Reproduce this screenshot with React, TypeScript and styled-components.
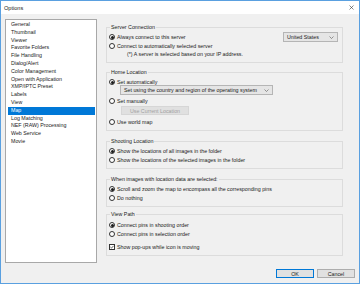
import React from "react";
import styled, { createGlobalStyle } from "styled-components";

const Global = createGlobalStyle`
  html, body { margin: 0; padding: 0; background: #ffffff; }
  body { font-family: "Liberation Sans", Arial, sans-serif; }
  * { box-sizing: border-box; }
`;

const Window = styled.div`
  width: 360px;
  height: 284px;
  border: 1px solid #5aa0e0;
  display: flex;
  flex-direction: column;
  background: #f0f0f0;
  color: #1a1a1a;
  font-size: 5.3px;
  overflow: hidden;
`;

const TitleBar = styled.div`
  height: 13px;
  flex: none;
  background: #ffffff;
  display: flex;
  align-items: center;
  justify-content: space-between;
  padding: 0 5px 0 3px;
  font-size: 5.6px;
  color: #222;
`;

const Body = styled.div`
  flex: 1;
  display: flex;
  flex-direction: column;
  padding: 5px 4px 5px 4px;
`;

const Main = styled.div`
  display: flex;
  gap: 9px;
  height: 244px;
  flex: none;
`;

const ListBox = styled.div`
  width: 92px;
  height: 244px;
  background: #ffffff;
  border: 1px solid #a8a8a8;
  padding: 1px 1px;
  display: flex;
  flex-direction: column;
`;

const ListItem = styled.div<{ $selected?: boolean }>`
  height: 7.8px;
  line-height: 7.8px;
  padding-left: 3px;
  margin-left: 1px;
  background: ${(p) => (p.$selected ? "#0078d7" : "transparent")};
  color: ${(p) => (p.$selected ? "#ffffff" : "#1a1a1a")};
  white-space: nowrap;
`;

const RightCol = styled.div`
  width: 237px;
  display: flex;
  flex-direction: column;
`;

const Group = styled.fieldset<{ $mt: number; $pt?: number; $pb?: number }>`
  margin: ${(p) => p.$mt}px 0 0 0;
  border: 1px solid #dcdcdc;
  padding: ${(p) => p.$pt ?? 2}px 4px ${(p) => p.$pb ?? 4}px 2px;
  min-width: 0;
  display: flex;
  flex-direction: column;
`;

const Legend = styled.legend`
  font-size: 5.3px;
  line-height: 8px;
  padding: 0 1px;
  margin-left: 1px;
  color: #1a1a1a;
`;

const Row = styled.div<{ $mt?: number; $indent?: number }>`
  height: 8px;
  display: flex;
  align-items: center;
  gap: 2px;
  margin-top: ${(p) => p.$mt ?? 0}px;
  padding-left: ${(p) => p.$indent ?? 0}px;
  white-space: nowrap;
`;

const SpreadRow = styled(Row)`
  justify-content: space-between;
`;

const Label = styled.span`
  display: flex;
  align-items: center;
  gap: 2px;
`;

const RadioDot = styled.span<{ $checked?: boolean }>`
  width: 6px;
  height: 6px;
  border-radius: 50%;
  border: 1px solid #333;
  background: #fff;
  display: flex;
  align-items: center;
  justify-content: center;
  flex: none;
  &::after {
    content: "";
    width: 3px;
    height: 3px;
    border-radius: 50%;
    background: ${(p) => (p.$checked ? "#1a1a1a" : "transparent")};
  }
`;

const CheckBox = styled.span`
  width: 6px;
  height: 6px;
  border: 1px solid #333;
  background: #fff;
  display: flex;
  align-items: center;
  justify-content: center;
  flex: none;
`;

const Select = styled.div<{ $w: number; $ml?: number }>`
  width: ${(p) => p.$w}px;
  height: 10px;
  margin-left: ${(p) => p.$ml ?? 0}px;
  background: #e5e5e5;
  border: 1px solid #b5b5b5;
  display: flex;
  align-items: center;
  justify-content: space-between;
  gap: 3px;
  padding: 0 3px 0 3px;
  flex: none;
  white-space: nowrap;
`;

const Button = styled.div<{ $w: number; $ml?: number; $mt?: number; $disabled?: boolean; $default?: boolean }>`
  width: ${(p) => p.$w}px;
  height: 9px;
  margin-left: ${(p) => p.$ml ?? 0}px;
  margin-top: ${(p) => p.$mt ?? 0}px;
  background: ${(p) => (p.$disabled ? "#e0e0e0" : "#e1e1e1")};
  border: 1px solid ${(p) => (p.$disabled ? "#d6d6d6" : p.$default ? "#0078d7" : "#adadad")};
  color: ${(p) => (p.$disabled ? "#a0a0a0" : "#1a1a1a")};
  display: flex;
  align-items: center;
  justify-content: center;
  white-space: nowrap;
  flex: none;
`;

const Footer = styled.div`
  display: flex;
  justify-content: flex-end;
  gap: 3px;
  margin-top: 6px;
`;

const Chevron = () => (
  <svg width="5" height="3" viewBox="0 0 5 3">
    <path d="M0.5 0.5 L2.5 2.5 L4.5 0.5" fill="none" stroke="#555" strokeWidth="0.6" />
  </svg>
);

const CloseIcon = () => (
  <svg width="5" height="5" viewBox="0 0 5 5">
    <path d="M0.5 0.5 L4.5 4.5 M4.5 0.5 L0.5 4.5" stroke="#333" strokeWidth="0.6" />
  </svg>
);

const Radio = ({ checked, children }: { checked?: boolean; children: React.ReactNode }) => (
  <Label>
    <RadioDot $checked={checked} />
    <span>{children}</span>
  </Label>
);

const items = [
  "General",
  "Thumbnail",
  "Viewer",
  "Favorite Folders",
  "File Handling",
  "Dialog/Alert",
  "Color Management",
  "Open with Application",
  "XMP/IPTC Preset",
  "Labels",
  "View",
  "Map",
  "Log Matching",
  "NEF (RAW) Processing",
  "Web Service",
  "Movie",
];

export default function App() {
  return (
    <>
      <Global />
      <Window>
        <TitleBar>
          <span>Options</span>
          <CloseIcon />
        </TitleBar>
        <Body>
          <Main>
            <ListBox>
              {items.map((it) => (
                <ListItem key={it} $selected={it === "Map"}>
                  {it}
                </ListItem>
              ))}
            </ListBox>
            <RightCol>
              <Group $mt={4}>
                <Legend>Server Connection</Legend>
                <SpreadRow>
                  <Radio checked>Always connect to this server</Radio>
                  <Select $w={55}>
                    <span>United States</span>
                    <Chevron />
                  </Select>
                </SpreadRow>
                <Row $mt={1}>
                  <Radio>Connect to automatically selected server</Radio>
                </Row>
                <Row $indent={18}>(*) A server is selected based on your IP address.</Row>
              </Group>
              <Group $mt={5}>
                <Legend>Home Location</Legend>
                <Row>
                  <Radio checked>Set automatically</Radio>
                </Row>
                <Row>
                  <Select $w={153} $ml={11}>
                    <span>Set using the country and region of the operating system</span>
                    <Chevron />
                  </Select>
                </Row>
                <Row $mt={3}>
                  <Radio>Set manually</Radio>
                </Row>
                <Button $w={68} $ml={12} $mt={1} $disabled>
                  Use Current Location
                </Button>
                <Row $mt={3}>
                  <Radio>Use world map</Radio>
                </Row>
              </Group>
              <Group $mt={6}>
                <Legend>Shooting Location</Legend>
                <Row>
                  <Radio checked>Show the locations of all images in the folder</Radio>
                </Row>
                <Row $mt={1}>
                  <Radio>Show the locations of the selected images in the folder</Radio>
                </Row>
              </Group>
              <Group $mt={6}>
                <Legend>When images with location data are selected:</Legend>
                <Row>
                  <Radio checked>Scroll and zoom the map to encompass all the corresponding pins</Radio>
                </Row>
                <Row $mt={1}>
                  <Radio>Do nothing</Radio>
                </Row>
              </Group>
              <Group $mt={3} $pt={3} $pb={4}>
                <Legend>View Path</Legend>
                <Row>
                  <Radio checked>Connect pins in shooting order</Radio>
                </Row>
                <Row $mt={1}>
                  <Radio>Connect pins in selection order</Radio>
                </Row>
                <Row $mt={5}>
                  <Label>
                    <CheckBox>
                      <svg width="4" height="4" viewBox="0 0 4 4">
                        <path d="M0.4 2 L1.5 3.1 L3.6 0.8" fill="none" stroke="#222" strokeWidth="0.7" />
                      </svg>
                    </CheckBox>
                    <span>Show pop-ups while icon is moving</span>
                  </Label>
                </Row>
              </Group>
            </RightCol>
          </Main>
          <Footer>
            <Button $w={38} $default>
              OK
            </Button>
            <Button $w={38}>Cancel</Button>
          </Footer>
        </Body>
      </Window>
    </>
  );
}
